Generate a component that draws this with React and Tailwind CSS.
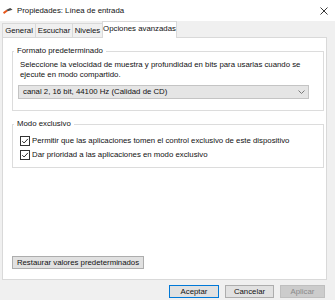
import React from "react";

const Check = () => (
  <svg width="10" height="10" viewBox="0 0 10 10" className="shrink-0">
    <rect x="0.5" y="0.5" width="9" height="9" fill="#fff" stroke="#333" />
    <path d="M2.2 5.1 L4.1 7 L7.9 2.9" fill="none" stroke="#333" strokeWidth="1" />
  </svg>
);

const tabs = [
  { label: "General", w: "w-[34px]" },
  { label: "Escuchar", w: "w-[38px]" },
  { label: "Niveles", w: "w-[31px]" },
];

const App = () => {
  return (
    <div className="w-[335px] h-[300px] bg-[#f0f0f0] flex flex-col overflow-hidden text-[7.8px] text-[#111] font-['Liberation_Sans',Arial,sans-serif]">
      {/* Title bar */}
      <div className="h-[21px] bg-white flex items-center shrink-0">
        <svg width="10" height="8" viewBox="0 0 11 8" className="ml-[3px]">
          <path d="M0 5.5 L3.8 2.6 L5.2 4.4 L1.2 7.4 Z" fill="#e8581c" />
          <path d="M3.8 2.6 L8 0.8 L10.5 2.6 L5.2 4.4 Z" fill="#4a4a4a" />
        </svg>
        <span className="ml-[4px] text-[7.8px]">Propiedades: Línea de entrada</span>
        <svg width="8" height="8" viewBox="0 0 8 8" className="ml-auto mr-[7px]">
          <path d="M0.5 0.5 L7.5 7.5 M7.5 0.5 L0.5 7.5" stroke="#222" strokeWidth="0.9" />
        </svg>
      </div>

      {/* Tabs */}
      <div className="h-[16px] flex items-end px-[2px] shrink-0">
        {tabs.map((t, i) => (
          <div
            key={t.label}
            className={`${t.w} h-[14px] border border-b-0 border-[#d9d9d9] bg-[#f0f0f0] flex items-center justify-center ${i > 0 ? "-ml-px" : ""}`}
          >
            {t.label}
          </div>
        ))}
        <div className="relative z-10 -ml-px -mb-px w-[75px] h-[17px] border border-b-0 border-[#d9d9d9] bg-white flex items-center justify-center pb-[2px]">
          Opciones avanzadas
        </div>
      </div>

      {/* Panel */}
      <div className="ml-[2px] w-[325px] h-[243px] bg-white border border-[#d9d9d9] flex flex-col pt-[8px] pl-[9px] pr-[2px] pb-[10px] shrink-0">
        <fieldset className="border border-[#dcdcdc] pb-[11px]">
          <legend className="ml-[1px] px-[3px] leading-[10px]">Formato predeterminado</legend>
          <div className="pl-[7px] mt-[4px] leading-[9.5px] whitespace-nowrap">
            Seleccione la velocidad de muestra y profundidad en bits para usarlas cuando se
            <br />
            ejecute en modo compartido.
          </div>
          <div className="ml-[5px] mt-[6px] w-[291px] h-[14px] bg-[#e5e5e5] border border-[#c4c4c4] flex items-center pl-[4px] pr-[3px]">
            <span>canal 2, 16 bit, 44100 Hz (Calidad de CD)</span>
            <svg width="7" height="4" viewBox="0 0 7 4" className="ml-auto">
              <path d="M0.5 0.5 L3.5 3.5 L6.5 0.5" stroke="#7a7a7a" fill="none" />
            </svg>
          </div>
        </fieldset>

        <fieldset className="mt-[8px] border border-[#dcdcdc] pb-[5px]">
          <legend className="ml-[1px] px-[3px] leading-[10px]">Modo exclusivo</legend>
          <div className="mt-[5px] pl-[7px] flex flex-col">
            <label className="h-[14px] flex items-center gap-[2px]">
              <Check />
              <span>Permitir que las aplicaciones tomen el control exclusivo de este dispositivo</span>
            </label>
            <label className="h-[14px] flex items-center gap-[2px]">
              <Check />
              <span>Dar prioridad a las aplicaciones en modo exclusivo</span>
            </label>
          </div>
        </fieldset>

        <button className="mt-auto w-[132px] h-[13px] bg-[#e1e1e1] border border-[#adadad] flex items-center justify-center leading-none">
          Restaurar valores predeterminados
        </button>
      </div>

      {/* Bottom buttons */}
      <div className="mt-[5px] flex justify-end gap-[6px] pr-[10px]">
        <button className="w-[50px] h-[13px] bg-[#e1e1e1] border border-[#0078d7] flex items-center justify-center leading-none">
          Aceptar
        </button>
        <button className="w-[49px] h-[13px] bg-[#e1e1e1] border border-[#adadad] flex items-center justify-center leading-none">
          Cancelar
        </button>
        <button className="w-[45px] h-[13px] bg-[#cccccc] border border-[#bfbfbf] text-[#8a8a8a] flex items-center justify-center leading-none">
          Aplicar
        </button>
      </div>
    </div>
  );
};

export default App;
